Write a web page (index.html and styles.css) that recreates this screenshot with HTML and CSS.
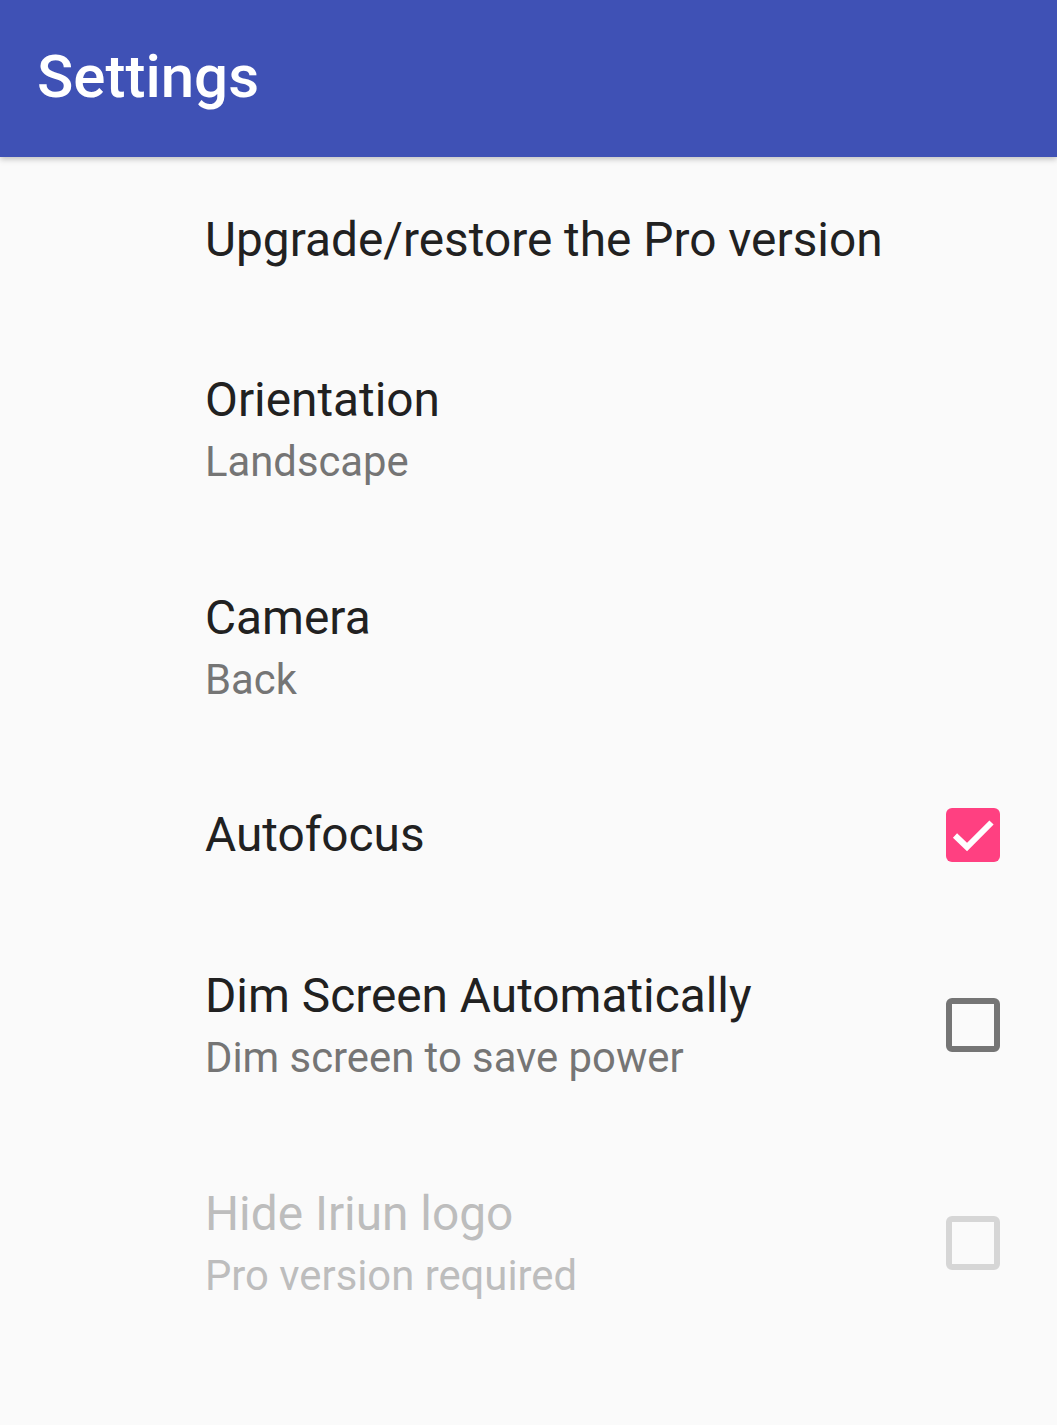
FILE: index.html
```html
<!DOCTYPE html>
<html lang="en">
<head>
<meta charset="utf-8">
<title>Settings</title>
<link rel="stylesheet" href="styles.css">
</head>
<body>
<header class="toolbar">
	<h1>Settings</h1>
</header>
<main class="prefs">
	<div class="pref pref-single pref-first">
		<div class="pref-text">
			<div class="pref-title">Upgrade/restore the Pro version</div>
		</div>
	</div>
	<div class="pref pref-double">
		<div class="pref-text">
			<div class="pref-title">Orientation</div>
			<div class="pref-summary">Landscape</div>
		</div>
	</div>
	<div class="pref pref-double">
		<div class="pref-text">
			<div class="pref-title">Camera</div>
			<div class="pref-summary">Back</div>
		</div>
	</div>
	<div class="pref pref-single pref-check">
		<div class="pref-text">
			<div class="pref-title">Autofocus</div>
		</div>
		<span class="checkbox checked">
			<svg viewBox="0 0 54 54" width="54" height="54"><path d="M9 27.5 L21 39 L45.5 14.5" fill="none" stroke="#fff" stroke-width="6"/></svg>
		</span>
	</div>
	<div class="pref pref-double">
		<div class="pref-text">
			<div class="pref-title">Dim Screen Automatically</div>
			<div class="pref-summary">Dim screen to save power</div>
		</div>
		<span class="checkbox"></span>
	</div>
	<div class="pref pref-double disabled">
		<div class="pref-text">
			<div class="pref-title">Hide Iriun logo</div>
			<div class="pref-summary">Pro version required</div>
		</div>
		<span class="checkbox"></span>
	</div>
</main>
</body>
</html>
```

FILE: styles.css
```css
html,body{
	margin:0;
}

*{
	box-sizing:border-box;
}

body{
	background:#fafafa;
	font-family:Roboto,"Noto Sans",sans-serif;
	width:1057px;
	min-height:1425px;
}

.toolbar{
	height:157px;
	background:#3f51b5;
	display:flex;
	align-items:center;
	padding:0 0 4px 37px;
	box-shadow:0 2px 6px rgba(0,0,0,.25);
	position:relative;
}

.toolbar h1{
	margin:0;
	color:#fff;
	font-size:60px;
	font-weight:500;
	letter-spacing:0;
}

.pref{
	display:flex;
	align-items:center;
	padding:0 57px 0 205px;
}

.pref-first{
	height:166px;
}

.pref-check{
	height:160px;
	padding-bottom:8px;
}

.pref-double{
	height:218px;
}

.pref-double .checkbox{
	margin-bottom:7px;
}

.pref-text{
	flex:1;
}

.pref-title{
	font-size:47.8px;
	line-height:60px;
	color:#212121;
}

.pref-summary{
	font-size:41.8px;
	line-height:64px;
	color:#757575;
}

.disabled .pref-title,
.disabled .pref-summary{
	color:#bdbdbd;
}

.checkbox{
	width:54px;
	height:54px;
	border:6px solid #757575;
	border-radius:6px;
	display:block;
	flex:none;
}

.checkbox.checked{
	background:#ff4081;
	border:none;
}

.checkbox svg{
	display:block;
}

.disabled .checkbox{
	border-color:#d6d6d6;
}
```
